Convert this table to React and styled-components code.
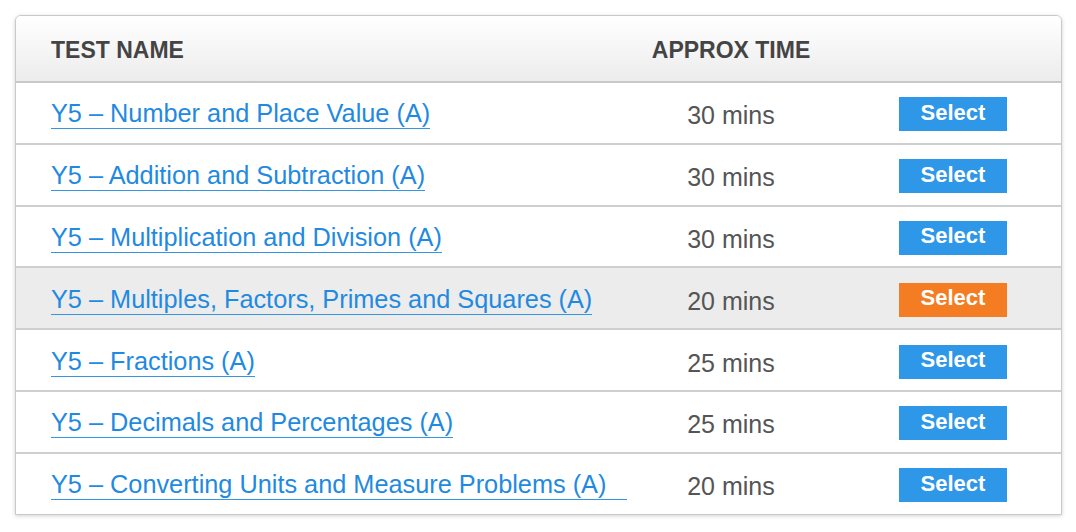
import React from "react";
import styled, { createGlobalStyle } from "styled-components";

const Global = createGlobalStyle`
  html, body { margin: 0; padding: 0; background: #ffffff; }
  body { padding: 15px 14px 15px 15px; font-family: "Liberation Sans", Arial, Helvetica, sans-serif; }
`;

const Card = styled.div`
  width: 1045px;
  border: 1px solid #c9c9c9;
  border-radius: 6px 6px 0 0;
  box-shadow: 0 1px 4px rgba(0, 0, 0, 0.18);
  background: #fff;
  overflow: hidden;
`;

const grid = `
  display: grid;
  grid-template-columns: 625px 180px 1fr;
  align-items: center;
`;

const Header = styled.div`
  ${grid}
  height: 65px;
  background: linear-gradient(#ffffff, #ececec);
  border-bottom: 2px solid #c8c8c8;
`;

const HeadCell = styled.div`
  font-size: 23px;
  font-weight: bold;
  color: #444;
  padding-left: ${(p) => (p.$center ? 0 : 35)}px;
  text-align: ${(p) => (p.$center ? "center" : "left")};
  padding-top: 3px;
`;

const Row = styled.div`
  ${grid}
  height: 56.8px;
  padding-top: 3px;
  background: ${(p) => (p.$highlight ? "#ececec" : "#fff")};
  border-bottom: ${(p) => (p.$last ? "none" : "2px solid #cfcfcf")};
`;

const NameCell = styled.div`
  padding-left: 35px;
`;

const TestLink = styled.a`
  display: inline-block;
  font-size: 25.3px;
  line-height: 28px;
  color: #1f8ae0;
  text-decoration: none;
  border-bottom: 1.5px solid #3495e2;
  padding-bottom: 1px;
  white-space: pre;
  cursor: pointer;
`;

const Time = styled.div`
  font-size: 25px;
  color: #555;
  text-align: center;
  padding-top: 3px;
`;

const ButtonCell = styled.div`
  padding-left: 78px;
`;

const SelectButton = styled.button`
  width: 108px;
  height: 34px;
  border: none;
  border-radius: 0;
  background: ${(p) => (p.$active ? "#f47c22" : "#2f97e8")};
  color: #fff;
  font-family: "Liberation Sans", Arial, Helvetica, sans-serif;
  font-weight: bold;
  font-size: 22px;
  padding: 0 0 3px;
  cursor: pointer;
`;

const tests = [
  { name: "Y5 – Number and Place Value (A)", time: "30 mins" },
  { name: "Y5 – Addition and Subtraction (A)", time: "30 mins" },
  { name: "Y5 – Multiplication and Division (A)", time: "30 mins" },
  { name: "Y5 – Multiples, Factors, Primes and Squares (A)", time: "20 mins", active: true },
  { name: "Y5 – Fractions (A)", time: "25 mins" },
  { name: "Y5 – Decimals and Percentages (A)", time: "25 mins" },
  { name: "Y5 – Converting Units and Measure Problems (A)\u00a0\u00a0\u00a0", time: "20 mins" },
];

export default function App() {
  return (
    <>
      <Global />
      <Card>
        <Header>
          <HeadCell>TEST NAME</HeadCell>
          <HeadCell $center>APPROX TIME</HeadCell>
          <div />
        </Header>
        {tests.map((t, i) => (
          <Row key={i} $highlight={t.active} $last={i === tests.length - 1}>
            <NameCell>
              <TestLink>{t.name}</TestLink>
            </NameCell>
            <Time>{t.time}</Time>
            <ButtonCell>
              <SelectButton $active={t.active}>Select</SelectButton>
            </ButtonCell>
          </Row>
        ))}
      </Card>
    </>
  );
}
